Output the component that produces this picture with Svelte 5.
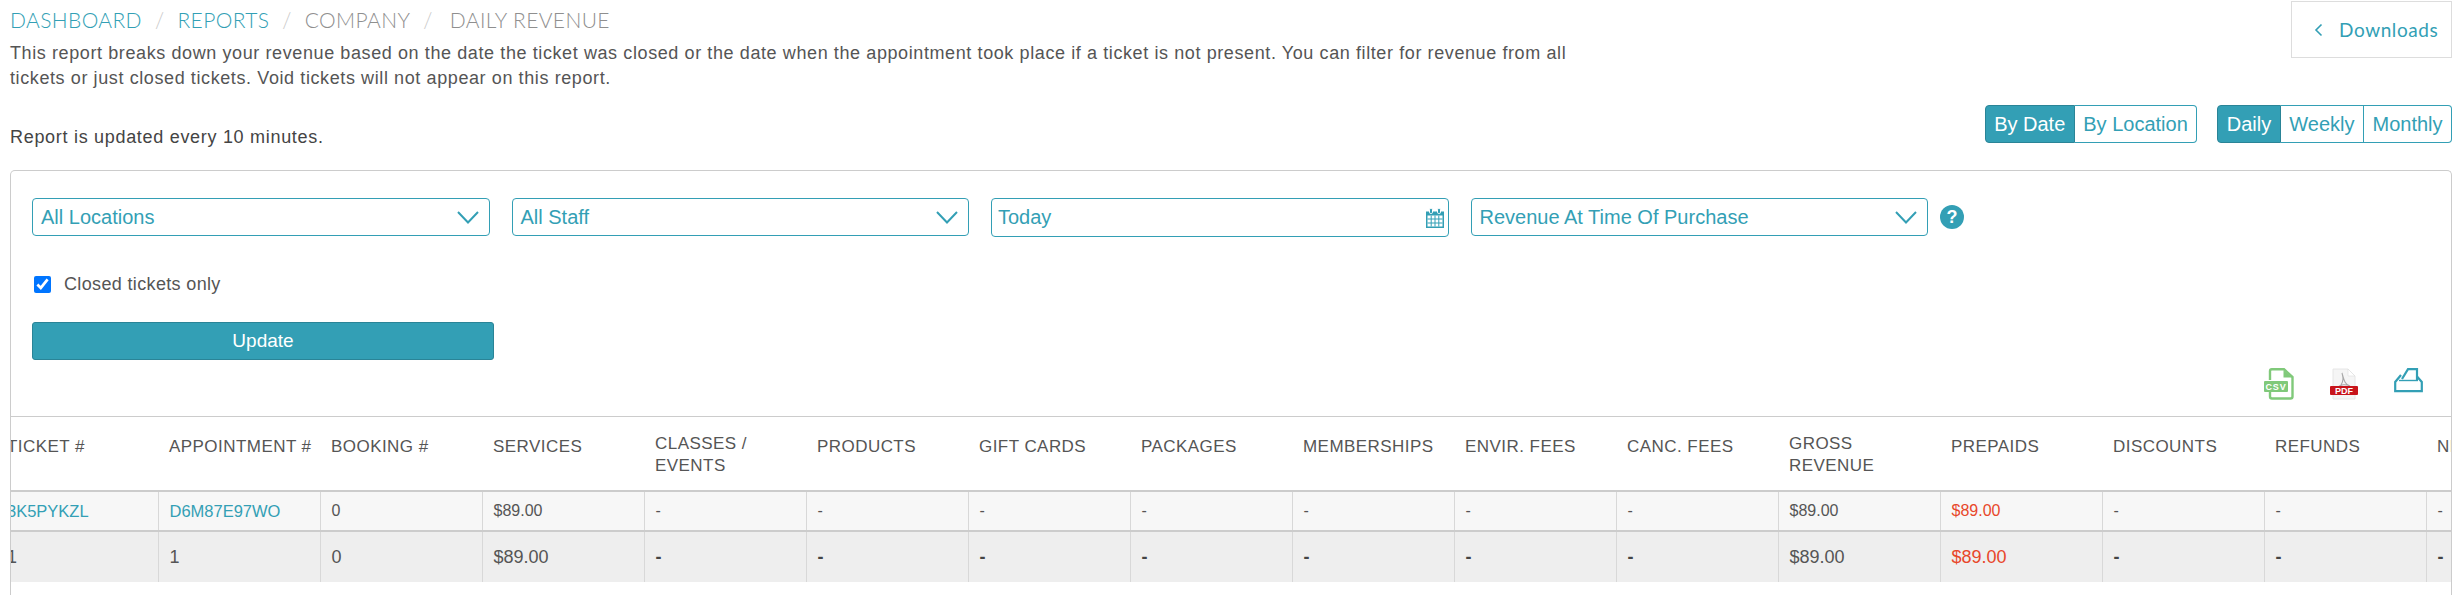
<script>
    const headers = [
        ["TICKET #"],
        ["APPOINTMENT #"],
        ["BOOKING #"],
        ["SERVICES"],
        ["CLASSES /", "EVENTS"],
        ["PRODUCTS"],
        ["GIFT CARDS"],
        ["PACKAGES"],
        ["MEMBERSHIPS"],
        ["ENVIR. FEES"],
        ["CANC. FEES"],
        ["GROSS", "REVENUE"],
        ["PREPAIDS"],
        ["DISCOUNTS"],
        ["REFUNDS"],
        ["NET"],
    ];

    const row = ["3K5PYKZL", "D6M87E97WO", "0", "$89.00", "-", "-", "-", "-", "-", "-", "-", "$89.00", "$89.00", "-", "-", "-"];
    const totals = ["1", "1", "0", "$89.00", "-", "-", "-", "-", "-", "-", "-", "$89.00", "$89.00", "-", "-", "-"];

    const filters = [
        { label: "All Locations" },
        { label: "All Staff" },
    ];

    function cellClass(i, value) {
        if (i < 2) return "link";
        if (i === 12) return "red";
        if (value === "-") return "dash";
        return "";
    }
</script>

<div class="page">
    <div class="top">
        <div class="intro">
            <div class="crumbs">
                <a href="#d">DASHBOARD</a><span class="sep">/</span><a href="#r">REPORTS</a><span class="sep">/</span><span>COMPANY</span><span class="sep last">/</span><span>DAILY REVENUE</span>
            </div>
            <p class="desc">
                This report breaks down your revenue based on the date the ticket was closed or the date when the appointment took place if a ticket is not present. You can filter for revenue from all tickets or just closed tickets. Void tickets will not appear on this report.
            </p>
        </div>
        <button class="downloads">
            <svg width="10" height="14" viewBox="0 0 10 14"><path d="M7.5 1.5 L2 7 L7.5 12.5" fill="none" stroke="#339fb5" stroke-width="1.6" /></svg>
            <span>Downloads</span>
        </button>
    </div>

    <div class="toolbar">
        <div class="updated">Report is updated every 10 minutes.</div>
        <div class="groups">
            <div class="group">
                <button class="active">By Date</button>
                <button>By Location</button>
            </div>
            <div class="group">
                <button class="active">Daily</button>
                <button>Weekly</button>
                <button>Monthly</button>
            </div>
        </div>
    </div>

    <div class="card">
        <div class="filters">
            {#each filters as f}
                <div class="field">
                    <span>{f.label}</span>
                    <svg width="22" height="13" viewBox="0 0 22 13"><path d="M1 1 L11 11.5 L21 1" fill="none" stroke="#339fb5" stroke-width="2" /></svg>
                </div>
            {/each}
            <div class="field date">
                <span>Today</span>
                <svg width="18" height="20" viewBox="0 0 18 20">
                    <path d="M0 3.5 H18 V20 H0 Z" fill="#339fb5" />
                    <rect x="3.5" y="0.5" width="3" height="5" rx="1.2" fill="#339fb5" stroke="#fff" />
                    <rect x="11.5" y="0.5" width="3" height="5" rx="1.2" fill="#339fb5" stroke="#fff" />
                    <path d="M1.5 7.5 H16.5 V18.5 H1.5 Z" fill="#fff" />
                    <path d="M1.5 11 H16.5 M1.5 15 H16.5 M5.2 7.5 V18.5 M9 7.5 V18.5 M12.8 7.5 V18.5" stroke="#339fb5" stroke-width="1" />
                </svg>
            </div>
            <div class="field">
                <span>Revenue At Time Of Purchase</span>
                <svg width="22" height="13" viewBox="0 0 22 13"><path d="M1 1 L11 11.5 L21 1" fill="none" stroke="#339fb5" stroke-width="2" /></svg>
            </div>
            <div class="help">?</div>
        </div>

        <label class="closed">
            <input type="checkbox" checked />
            <span>Closed tickets only</span>
        </label>

        <button class="update">Update</button>

        <div class="exports">
            <svg width="30" height="32" viewBox="0 0 30 32">
                <path d="M6 12 V3 Q6 1.2 7.8 1.2 H20 L28.5 9 V28.5 Q28.5 30.5 26.5 30.5 H8 Q6 30.5 6 28.5 V24" fill="none" stroke="#80c97a" stroke-width="2.4" />
                <path d="M19.5 2 V9.5 H28 Z" fill="#80c97a" />
                <rect x="0" y="13" width="24" height="11" rx="1" fill="#80c97a" />
                <text x="12" y="21.8" class="csv">CSV</text>
            </svg>
            <svg width="28" height="32" viewBox="0 0 28 32">
                <path d="M3 1 H18 L25 8 V31 H3 Z" fill="#f5f5f5" stroke="#e6e6e6" />
                <path d="M18 1 L25 8 H18 Z" fill="#fff" stroke="#ddd" stroke-width="0.6" />
                <path d="M12 5 C13 9 14 12 11 17 C10 19 7 21 7.5 20 C10 16 16 16 20 18 C15 17 14 12 12 5" fill="none" stroke="#a9a9a9" stroke-width="1.1" />
                <rect x="0" y="18" width="28" height="9" rx="1" fill="#c8141b" />
                <text x="14" y="25.7" class="pdf">PDF</text>
            </svg>
            <svg width="29" height="25" viewBox="0 0 29 25">
                <path d="M8 11 L14 1.2 H23 V12" fill="none" stroke="#339fb5" stroke-width="2.2" />
                <path d="M7 7 L1.2 14 V23.2 H27.8 V14 L23 8.5" fill="none" stroke="#339fb5" stroke-width="2.2" />
                <path d="M5 12.5 H24" stroke="#339fb5" stroke-width="1.4" />
            </svg>
        </div>

        <div class="table-wrap">
            <table>
                <thead>
                    <tr>
                        {#each headers as h}
                            <th class:two={h.length > 1}>
                                {#each h as line}<div>{line}</div>{/each}
                            </th>
                        {/each}
                    </tr>
                </thead>
                <tbody>
                    <tr class="row">
                        {#each row as v, i}
                            <td class={cellClass(i, v)}>{v}</td>
                        {/each}
                    </tr>
                    <tr class="total">
                        {#each totals as v, i}
                            <td class={i === 12 ? "red" : v === "-" ? "dash" : ""}>{v}</td>
                        {/each}
                    </tr>
                </tbody>
            </table>
        </div>
    </div>
</div>

<style>
    :global(body) {
        margin: 0;
        background: #ffffff;
    }

    .page {
        height: 595px;
        overflow: hidden;
        padding: 1px 10px 0 10px;
        box-sizing: border-box;
        font-family: "Liberation Sans", Arial, sans-serif;
        color: #555555;
    }

    button {
        font-family: inherit;
        cursor: pointer;
    }

    .top {
        display: flex;
        justify-content: space-between;
        align-items: flex-start;
        height: 104px;
    }

    .intro {
        width: 1585px;
    }

    .crumbs {
        font-family: Lato, sans-serif;
        font-weight: 300;
        font-size: 21px;
        line-height: 24px;
        margin-top: 7px;
        color: #8f8f8f;
        letter-spacing: 0.38px;
    }

    .crumbs a {
        color: #339fb5;
        text-decoration: none;
    }

    .sep {
        color: #c9c9c9;
        margin: 0 13px;
    }

    .sep.last {
        margin-right: 17px;
    }

    .desc {
        margin: 9px 0 0 0;
        font-size: 18px;
        line-height: 25px;
        letter-spacing: 0.6px;
    }

    .downloads {
        width: 161px;
        height: 57px;
        border: 1px solid #dddddd;
        background: #ffffff;
        color: #339fb5;
        font-family: Lato, sans-serif;
        font-size: 19px;
        letter-spacing: 0.6px;
        display: flex;
        align-items: center;
        gap: 15px;
        padding: 0 0 0 22px;
    }

    .toolbar {
        display: flex;
        justify-content: space-between;
        align-items: center;
        height: 38px;
    }

    .updated {
        font-size: 18px;
        letter-spacing: 0.7px;
        color: #444444;
        margin-top: 26px;
    }

    .groups {
        display: flex;
        gap: 20px;
    }

    .group {
        display: flex;
        height: 38px;
    }

    .group button {
        height: 38px;
        border: 1px solid #339fb5;
        border-left-width: 0;
        background: #ffffff;
        color: #339fb5;
        font-size: 20px;
        padding: 0 8.5px;
        white-space: nowrap;
    }

    .group button:first-child {
        border-left-width: 1px;
        border-radius: 4px 0 0 4px;
    }

    .group button:last-child {
        border-radius: 0 4px 4px 0;
    }

    .group button.active {
        background: #339fb5;
        border-color: #2a8497;
        color: #ffffff;
    }

    .card {
        margin-top: 27px;
        height: 440px;
        border: 1px solid #cccccc;
        border-bottom: 0;
        border-radius: 5px 5px 0 0;
        padding-top: 27px;
        box-sizing: border-box;
        display: flex;
        flex-direction: column;
    }

    .filters {
        display: flex;
        align-items: flex-start;
        gap: 22px;
        padding-left: 21px;
    }

    .field {
        width: 457.5px;
        height: 38px;
        border: 1px solid #339fb5;
        border-radius: 4px;
        box-sizing: border-box;
        display: flex;
        justify-content: space-between;
        align-items: center;
        padding: 0 10px 0 8px;
        color: #339fb5;
        font-size: 20px;
    }

    .field.date {
        height: 39px;
        padding: 0 4px 0 6px;
    }

    .help {
        width: 24px;
        height: 24px;
        border-radius: 50%;
        background: #339fb5;
        color: #ffffff;
        font-size: 18px;
        font-weight: 700;
        line-height: 24px;
        text-align: center;
        margin: 7px 0 0 -10px;
    }

    .closed {
        display: flex;
        align-items: center;
        gap: 13px;
        margin: 37px 0 0 23px;
        font-size: 18px;
        letter-spacing: 0.35px;
        line-height: 20px;
    }

    .closed input {
        width: 17px;
        height: 17px;
        margin: 0;
    }

    .update {
        margin: 28px 0 0 21px;
        width: 462px;
        height: 38px;
        flex: none;
        background: #339fb5;
        border: 1px solid #2a8497;
        border-radius: 3px;
        color: #ffffff;
        font-size: 19px;
    }

    .exports {
        display: flex;
        justify-content: flex-end;
        align-items: flex-start;
        height: 48px;
        margin-top: 8px;
        padding-right: 28px;
        gap: 36px;
    }

    .csv {
        font-family: "Liberation Sans", Arial, sans-serif;
        font-size: 9px;
        font-weight: 700;
        fill: #ffffff;
        text-anchor: middle;
        letter-spacing: 0.8px;
    }

    .pdf {
        font-family: "Liberation Sans", Arial, sans-serif;
        font-size: 9px;
        font-weight: 700;
        fill: #ffffff;
        text-anchor: middle;
    }

    .table-wrap {
        overflow: hidden;
        border-top: 1px solid #cccccc;
    }

    table {
        border-collapse: collapse;
        table-layout: fixed;
        width: 2592px;
        margin-left: -15px;
    }

    th {
        height: 74px;
        box-sizing: border-box;
        padding: 16px 11px 0 11px;
        text-align: left;
        vertical-align: top;
        font-weight: 400;
        font-size: 17px;
        letter-spacing: 0.45px;
        line-height: 22px;
        color: #555555;
        border-bottom: 2px solid #cccccc;
        white-space: nowrap;
    }

    th:not(.two) {
        padding-top: 19px;
    }

    td {
        box-sizing: border-box;
        padding: 0 11px;
        border-left: 1px solid #d8d8d8;
        white-space: nowrap;
    }

    td:first-child {
        border-left: 0;
    }

    .row td {
        height: 40px;
        background: #f7f7f7;
        font-size: 16px;
        border-bottom: 2px solid #cccccc;
    }

    .row td.link {
        font-size: 16.5px;
    }

    .total td {
        height: 51px;
        background: #eeeeee;
        font-size: 18px;
    }

    .total td.dash {
        font-weight: 700;
        color: #444444;
    }

    .link {
        color: #339fb5;
    }

    .red {
        color: #e8472a;
    }
</style>
